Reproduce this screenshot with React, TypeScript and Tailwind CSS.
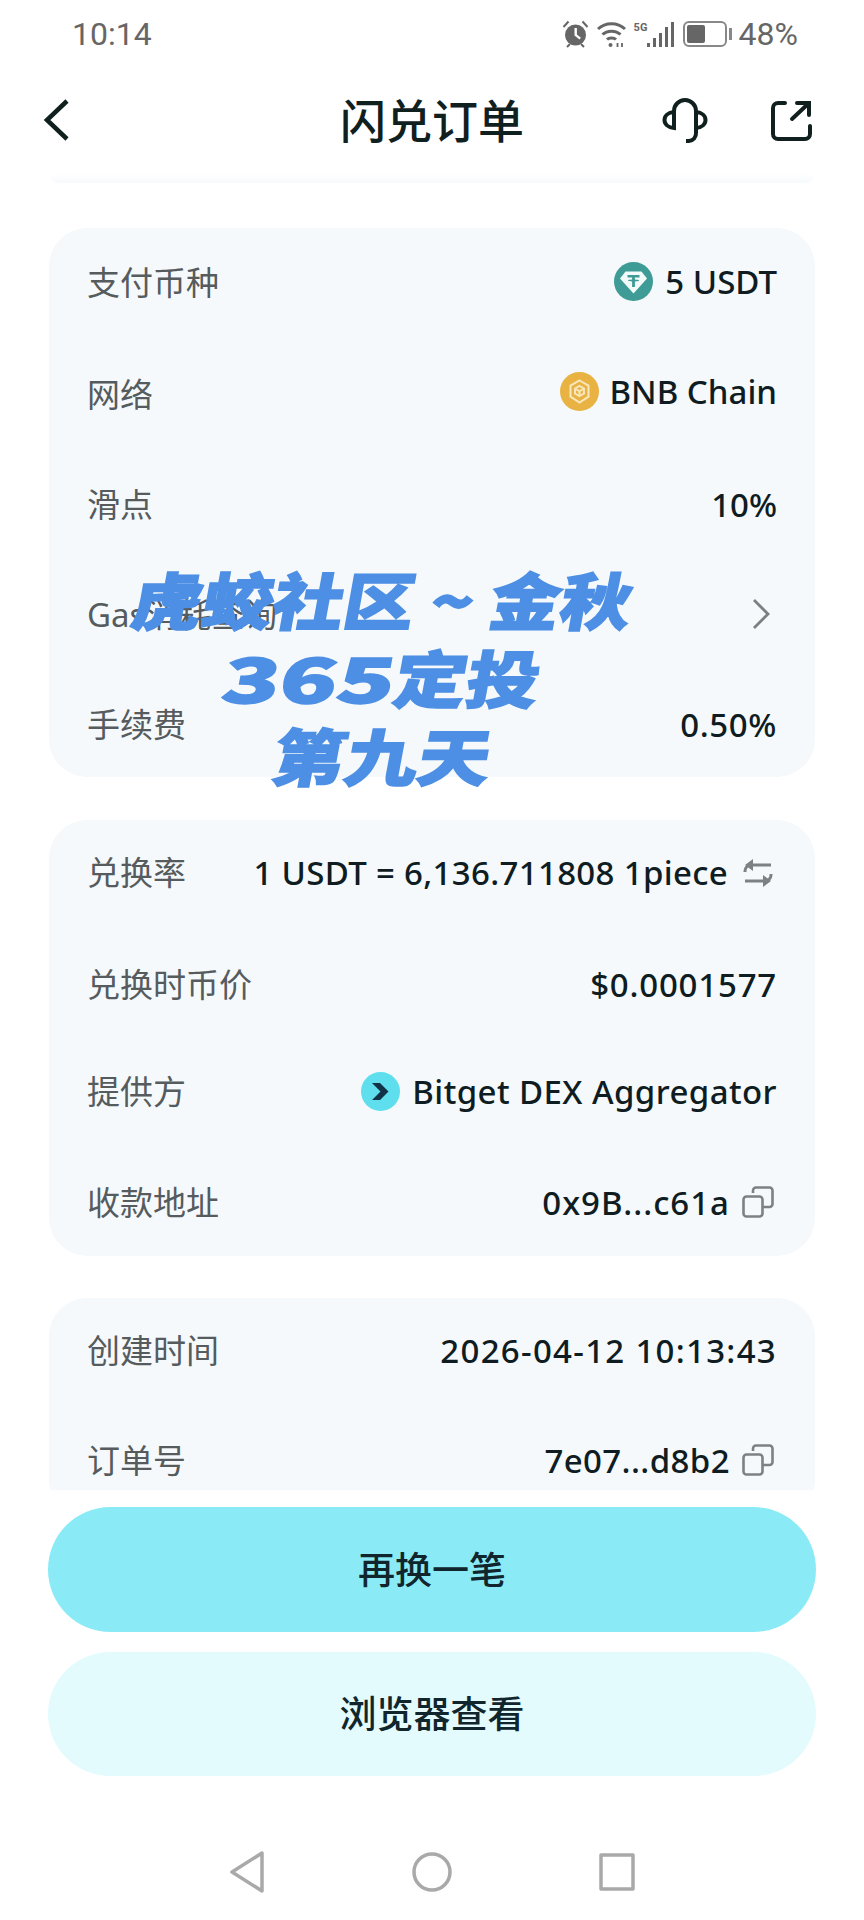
const font = "font-['Noto_Sans','Noto_Sans_CJK_SC',sans-serif]";

function Row({
  label,
  height,
  valueClass = '',
  children,
}: {
  label: React.ReactNode;
  height: string;
  valueClass?: string;
  children?: React.ReactNode;
}) {
  return (
    <div className={`flex items-center justify-between ${height}`}>
      <span className="text-[33px] leading-none text-[#565b5e]">{label}</span>
      <div className={`flex items-center text-[33px] leading-none font-medium text-[#0f1c22] ${valueClass}`}>{children}</div>
    </div>
  );
}

function CopyIcon() {
  return (
    <svg className="ml-[12px] mr-[3px] h-[32px] w-[32px]" viewBox="0 0 32 32" fill="none" stroke="#7c8184" strokeWidth="2.6">
      <rect x="1.5" y="10.5" width="19" height="20" rx="3" />
      <path d="M11 7V4.5a3 3 0 0 1 3-3h13.5a3 3 0 0 1 3 3V18a3 3 0 0 1-3 3H21" />
    </svg>
  );
}

function UsdtLogo() {
  return (
    <svg className="mr-[12px] h-[39px] w-[39px]" viewBox="0 0 39 39">
      <circle cx="19.5" cy="19.5" r="19.5" fill="#3f9b96" />
      <path d="M11.5 9.500h16l5.500 7-13.500 15-13.500-15z" fill="#f2fbfa" />
      <path d="M13.500 13h12v2.400h-4.600v2.200c2.400.1 4.300.5 4.300 1s-1.900.9-4.300 1v5.400h-2.800v-5.400c-2.400-.1-4.300-.5-4.300-1s1.900-.9 4.300-1v-2.200h-4.600z" fill="#3f9b96" />
    </svg>
  );
}

function BnbLogo() {
  return (
    <svg className="mr-[11px] h-[39px] w-[39px]" viewBox="0 0 39 39">
      <circle cx="19.5" cy="19.5" r="19.5" fill="#e9b343" />
      <g fill="none" stroke="#f8e7bd" strokeWidth="2">
        <path d="M19.5 8.500l9 5.200v11l-9 5.800-9-5.800v-11z" />
        <path d="M15 16.500l4.500-2.600 4.500 2.600v5l-4.500 2.600-4.500-2.600z" />
        <path d="M15 16.500l4.500 2.800 4.500-2.800M19.500 19.300v4.800" />
      </g>
    </svg>
  );
}

function BitgetLogo() {
  return (
    <svg className="mr-[12px] h-[39px] w-[39px]" viewBox="0 0 39 39">
      <circle cx="19.5" cy="19.5" r="19.5" fill="#5fdfee" />
      <path d="M11 11h8l8.500 8.500L19 28h-8l8.500-8.500z" fill="#123247" />
    </svg>
  );
}

export default function App() {
  return (
    <div className={`relative flex h-[1920px] w-[864px] flex-col overflow-hidden bg-white ${font}`}>
      {/* status bar */}
      <div className="flex h-[66px] items-center justify-between pl-[72px] pr-[66px] pt-[1px] font-['Roboto',sans-serif] text-[#666]">
        <span className="text-[32px] leading-none">10:14</span>
        <div className="flex items-center">
          <svg className="h-[28px] w-[27px]" viewBox="0 0 27 28" fill="#666">
            <circle cx="13.500" cy="15" r="10.500" />
            <path d="M12.500 8h2.400v6.500l4 3.200-1.400 1.800-5-4z" fill="#fff" />
            <path d="M1.500 7l5-5.500M25.500 7l-5-5.500M5 27l3-3M22 27l-3-3" stroke="#666" strokeWidth="2" />
          </svg>
          <svg className="ml-[7px] h-[28px] w-[31px]" viewBox="0 0 31 28" fill="none" stroke="#666" strokeWidth="3">
            <path d="M2 9c7.500-7 19.500-7 27 0M6.500 14.500c4.500-4.500 13.500-4.500 18 0M11 19.500c2-2 7-2 9 0" />
            <circle cx="14.500" cy="25" r="2" fill="#666" stroke="none" />
            <path d="M21.500 23v4M26 23v4" strokeWidth="1.800" />
          </svg>
          <span className="mb-[12px] ml-[7px] w-[13px] text-[11px] font-bold leading-none">5G</span>
          <div className="flex h-[26px] items-end gap-[3px]">
            <span className="h-[4px] w-[3px] bg-[#666]" />
            <span className="h-[9px] w-[3px] bg-[#666]" />
            <span className="h-[14px] w-[3px] bg-[#666]" />
            <span className="h-[20px] w-[3px] bg-[#666]" />
            <span className="h-[25px] w-[3px] bg-[#666]" />
          </div>
          <div className="ml-[9px] flex items-center">
            <div className="h-[26px] w-[44px] rounded-[6px] border-[2.5px] border-[#888] p-[2px]">
              <div className="h-full w-[18px] rounded-[2px] bg-[#666]" />
            </div>
            <span className="ml-[2px] h-[12px] w-[3px] bg-[#888]" />
          </div>
          <span className="ml-[7px] text-[32px] leading-none">48%</span>
        </div>
      </div>

      {/* header */}
      <div className="relative flex h-[108px] items-center justify-between pl-[42px] pr-[52px]">
        <svg className="h-[44px] w-[28px]" viewBox="0 0 28 44" fill="none" stroke="#10201f" strokeWidth="4.5">
          <path d="M25 3L5 22l20 19" />
        </svg>
        <span className="absolute left-0 right-0 text-center text-[46px] font-medium leading-none text-[#10201f]">闪兑订单</span>
        <div className="flex items-center gap-[63px]">
          <svg className="h-[46px] w-[46px]" viewBox="0 0 46 46" fill="none" stroke="#10201f" strokeWidth="4">
            <path d="M12 18V14a11 11 0 0 1 22 0v22a7.500 7.500 0 0 1-7 8h-3" />
            <path d="M12 15c-6 .5-9.500 4-9.500 8s3.500 7.500 9.500 8zM34 15c6 .5 9.500 4 9.500 8s-3.500 7.500-9.500 8z" />
          </svg>
          <svg className="h-[41px] w-[41px]" viewBox="0 0 41 41" fill="none" stroke="#10201f" strokeWidth="4" strokeLinecap="round">
            <path d="M14 3H7a5 5 0 0 0-5 5v26a5 5 0 0 0 5 5h27a5 5 0 0 0 5-5v-8" />
            <path d="M21 19L38 3M26 3h12v12" />
          </svg>
        </div>
      </div>

      {/* scrolled order details */}
      <div className="h-[1316px] overflow-hidden px-[49px]">
        <div className="h-[9px] rounded-b-[30px] bg-gradient-to-b from-white to-[#f6fafb]" />
        <div className="mt-[45px] rounded-[38px] bg-[#f5f9fb] px-[38px]">
          <Row label="支付币种" height="h-[108px]" valueClass="mb-[2px]">
            <UsdtLogo />5 USDT
          </Row>
          <Row label="网络" height="h-[116px]" valueClass="mb-[6px]">
            <BnbLogo />BNB Chain
          </Row>
          <Row label="滑点" height="h-[105px]">10%</Row>
          <Row label="Gas消耗查询" height="h-[114px]">
            <svg className="mr-[7px] h-[32px] w-[18px]" viewBox="0 0 18 32" fill="none" stroke="#7a7f82" strokeWidth="2.8">
              <path d="M2 2l14 14L2 30" />
            </svg>
          </Row>
          <Row label="手续费" height="h-[106px]" valueClass="tracking-[0.6px]">0.50%</Row>
        </div>

        <div className="mt-[43px] rounded-[38px] bg-[#f5f9fb] px-[38px]">
          <Row label="兑换率" height="h-[105px]" valueClass="tracking-[0.33px]">
            1 USDT = 6,136.711808 1piece
            <svg className="ml-[14px] mr-[3px] h-[30px] w-[32px]" viewBox="0 0 32 30" fill="none" stroke="#7c8184" strokeWidth="3">
              <path d="M29 7H9a6 6 0 0 0-6 6v1M3 23h20a6 6 0 0 0 6-6v-1" />
              <path d="M11 1v12L3 7zM21 17v12l8-6z" fill="#7c8184" stroke="none" />
            </svg>
          </Row>
          <Row label="兑换时币价" height="h-[118px]" valueClass="tracking-[0.8px]">$0.0001577</Row>
          <Row label="提供方" height="h-[96px]" valueClass="tracking-[0.42px]">
            <BitgetLogo />Bitget DEX Aggregator
          </Row>
          <Row label="收款地址" height="h-[117px] pt-[9px]" valueClass="tracking-[1px]">
            0x9B...c61a
            <CopyIcon />
          </Row>
        </div>

        <div className="mt-[42px] rounded-[38px] bg-[#f5f9fb] px-[38px]">
          <Row label="创建时间" height="h-[104px]" valueClass="tracking-[1.3px]">2026-04-12 10:13:43</Row>
          <Row label="订单号" height="h-[116px]" valueClass="tracking-[0.4px]">
            7e07...d8b2
            <CopyIcon />
          </Row>
        </div>
      </div>

      {/* actions */}
      <div className="flex flex-col gap-[20px] px-[48px] pt-[17px]">
        <button className="flex h-[125px] items-center justify-center rounded-full bg-[#8aebf6] text-[37px] font-medium text-[#10262c]">再换一笔</button>
        <button className="flex h-[124px] items-center justify-center rounded-full bg-[#e4fbfe] text-[37px] font-medium text-[#10262c]">浏览器查看</button>
      </div>

      {/* nav bar */}
      <div className="flex flex-1 items-center justify-center gap-[147px] pt-[47px]">
        <svg className="h-[44px] w-[36px]" viewBox="0 0 36 44" fill="none" stroke="#a9a9a9" strokeWidth="3.5" strokeLinejoin="round">
          <path d="M33 3v38L3 22z" />
        </svg>
        <svg className="h-[40px] w-[40px]" viewBox="0 0 40 40" fill="none" stroke="#a9a9a9" strokeWidth="3.5">
          <circle cx="20" cy="20" r="18" />
        </svg>
        <svg className="h-[38px] w-[36px]" viewBox="0 0 36 38" fill="none" stroke="#a9a9a9" strokeWidth="3.5" strokeLinejoin="round">
          <rect x="2" y="2" width="32" height="34" />
        </svg>
      </div>

      {/* watermark */}
      <div className="absolute left-[69px] top-[559px] w-[628px] text-center font-['Noto_Sans_CJK_SC',sans-serif] text-[62px] font-black leading-[78px] text-[#4d8fe4] [-webkit-text-stroke:1.5px_#4d8fe4]">
        <div className="-skew-x-[9deg] scale-x-[1.14]">虎蛟社区 ~ 金秋</div>
        <div className="-skew-x-[9deg] scale-x-[1.17]">
          <span className="mx-[16px] inline-block scale-x-[1.3]">365</span>定投
        </div>
        <div className="-skew-x-[9deg] scale-x-[1.17]">第九天</div>
      </div>
    </div>
  );
}
